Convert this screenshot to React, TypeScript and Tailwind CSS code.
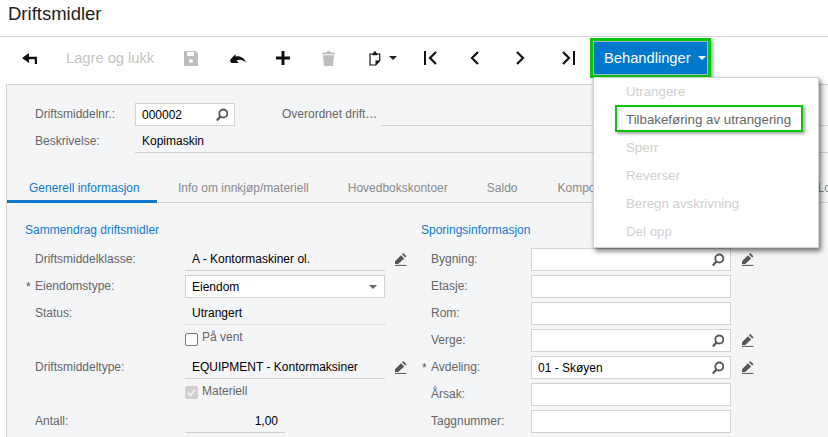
import type { ReactNode } from 'react';

const SearchIcon = () => (
  <svg width="14" height="14" viewBox="0 0 14 14" className="shrink-0">
    <circle cx="8.300" cy="5.500" r="4" fill="none" stroke="#555" strokeWidth="1.800" />
    <path d="M5.500 8.500 1.800 12.400" stroke="#555" strokeWidth="2.200" />
  </svg>
);

const PencilIcon = () => (
  <svg width="13" height="13" viewBox="0 0 13 13" className="shrink-0">
    <path d="M1 8.200 7 2.200l3.200 3.200-6 5.600H1z" fill="#555" />
    <path d="M8 1.200 9.200 0l3.300 3.300-1.300 1.200z" fill="#555" />
    <path d="M1 12.400h11.400" stroke="#555" strokeWidth="1" />
  </svg>
);

const tool = (content: ReactNode, cls = '') => (
  <div className={`flex shrink-0 items-center justify-center ${cls}`}>{content}</div>
);

function Toolbar() {
  return (
    <div className="flex h-[47px] items-center pb-[5px]">
      {tool(
        <svg width="15" height="11" viewBox="0 0 15 11">
          <path d="M0 5 7 0v3.800h8V11h-2.200V6.200H7V10z" fill="#111" />
        </svg>,
        'w-[15px] ml-[22px]'
      )}
      <span className="ml-[29px] w-[89px] shrink-0 whitespace-nowrap text-[14.700px] text-[#c4c4c4]">Lagre og lukk</span>
      {tool(
        <svg width="14" height="15" viewBox="0 0 14 15">
          <path d="M0 0h11.500L14 2.500V15H0z" fill="#bdbdbd" />
          <path d="M3 1h7v4H3z" fill="#fff" />
          <circle cx="7" cy="10" r="2" fill="#fff" />
        </svg>,
        'w-[14px] ml-[29px]'
      )}
      {tool(
        <svg width="16" height="9" viewBox="0 0 16 9">
          <path d="M0 6 5.500 0v2.400C10 1.500 14.500 3.500 16 9 13.500 5.800 9.500 5 6.500 6.200L8.500 9H1z" fill="#111" />
        </svg>,
        'w-[16px] ml-[32px]'
      )}
      {tool(
        <svg width="14" height="14" viewBox="0 0 14 14">
          <path d="M5.500 0h3v5.500H14v3H8.500V14h-3V8.500H0v-3h5.500z" fill="#111" />
        </svg>,
        'w-[14px] ml-[30px]'
      )}
      {tool(
        <svg width="13" height="15" viewBox="0 0 13 15">
          <path d="M0 1.500h4.500L5 0h3l.5 1.500H13v1.700H0zM1 4.200h11L11 15H2z" fill="#bdbdbd" />
        </svg>,
        'w-[13px] ml-[32px]'
      )}
      {tool(
        <svg width="12" height="15" viewBox="0 0 12 15">
          <path d="M1 3h9.700v6.500L6.800 14H1z" fill="#fff" stroke="#111" strokeWidth="1.200" />
          <path d="M3.500 2.200h1.200V.6h2.400v1.600h1.200v2H3.500zM6.500 14V9.500h4.500z" fill="#111" />
        </svg>,
        'w-[12px] ml-[34px]'
      )}
      <span className="ml-[8px] h-0 w-0 shrink-0 border-x-[4px] border-t-[4px] border-x-transparent border-t-[#222]" />
      {tool(
        <svg width="13" height="14" viewBox="0 0 13 14">
          <path d="M1 0v14" stroke="#111" strokeWidth="2" />
          <path d="M12 1 6 7l6 6" fill="none" stroke="#111" strokeWidth="2.200" />
        </svg>,
        'w-[13px] ml-[27px]'
      )}
      {tool(
        <svg width="9" height="14" viewBox="0 0 9 14">
          <path d="M8 1 2 7l6 6" fill="none" stroke="#111" strokeWidth="2.200" />
        </svg>,
        'w-[9px] ml-[33px]'
      )}
      {tool(
        <svg width="9" height="14" viewBox="0 0 9 14">
          <path d="m1 1 6 6-6 6" fill="none" stroke="#111" strokeWidth="2.200" />
        </svg>,
        'w-[9px] ml-[37px]'
      )}
      {tool(
        <svg width="13" height="14" viewBox="0 0 13 14">
          <path d="M12 0v14" stroke="#111" strokeWidth="2" />
          <path d="m1 1 6 6-6 6" fill="none" stroke="#111" strokeWidth="2.200" />
        </svg>,
        'w-[13px] ml-[37px]'
      )}
    </div>
  );
}

function Label({ text, required }: { text: string; required?: boolean }) {
  return (
    <div className="relative w-[150px] shrink-0 pb-[2px] text-[#666]">
      {required && <span className="absolute left-[-9px] top-[1px] text-[#555]">*</span>}
      {text}
    </div>
  );
}

function Row({ children }: { children: ReactNode }) {
  return <div className="mb-[4px] flex h-[23px] items-center">{children}</div>;
}

function TextField({ value, icon }: { value?: string; icon?: boolean }) {
  return (
    <div className="flex h-[23px] w-[200px] shrink-0 items-center justify-between border border-[#d2d2d2] bg-white pl-[6px] pr-[5px] text-black">
      <span>{value}</span>
      {icon && <SearchIcon />}
    </div>
  );
}

function LineField({ value, dotted, narrow, right }: { value: string; dotted?: boolean; narrow?: boolean; right?: boolean }) {
  return (
    <div
      className={`flex h-[23px] shrink-0 items-center border-b border-[#d2d2d2] px-[7px] text-black ${dotted ? 'border-dotted' : ''} ${narrow ? 'w-[100px]' : 'w-[200px]'} ${right ? 'justify-end' : ''}`}
    >
      {value}
    </div>
  );
}

const tabs = [
  { text: 'Info om innkjøp/materiell', left: 21 },
  { text: 'Hovedbokskontoer', left: 39 },
  { text: 'Saldo', left: 39 },
  { text: 'Komponenter', left: 40 },
  { text: 'Lokasjon', left: 188 },
];

const menu = ['Utrangere', 'Tilbakeføring av utrangering', 'Sperr', 'Reverser', 'Beregn avskrivning', 'Del opp'];

export default function App() {
  return (
    <div className="relative h-[437px] w-[828px] overflow-hidden bg-white font-['Liberation_Sans',Arial,sans-serif] text-[12px]">
      <div className="h-[37px] border-b border-[#d2d2d2] pl-[8px] pt-[1px] text-[18.500px] leading-[25px] text-[#222]">Driftsmidler</div>
      <Toolbar />

      <div className="ml-[6px] h-[400px] border-l border-t border-[#d2d2d2] bg-[#f4f5f7]">
        <div className="flex h-[41px] items-end">
          <div className="flex h-[23px] w-[128px] items-center pb-[2px] pl-[28px] text-[#666]">Driftsmiddelnr.:</div>
          <div className="flex h-[23px] w-[100px] items-center justify-between border border-[#d2d2d2] bg-white pl-[6px] pr-[5px] text-black">
            000002
            <SearchIcon />
          </div>
          <div className="flex h-[23px] w-[146px] items-center whitespace-nowrap pb-[2px] pl-[47px] text-[#666]">Overordnet drift…</div>
          <div className="h-[23px] flex-1 border-b border-[#d2d2d2]" />
        </div>
        <div className="mt-[4px] flex h-[23px]">
          <div className="flex w-[128px] items-center pb-[2px] pl-[28px] text-[#666]">Beskrivelse:</div>
          <div className="flex flex-1 items-center border-b border-[#d2d2d2] pl-[7px] text-black">Kopimaskin</div>
        </div>

        <div className="mt-[15px] flex h-[35px] items-start border-b border-[#d2d2d2] whitespace-nowrap">
          <div className="h-[35px] w-[150px] shrink-0 border-b-[3px] border-[#0f7ad0] pl-[22px] pt-[13px] leading-[15px] text-[#0f7ad0]">Generell informasjon</div>
          {tabs.map((t) => (
            <div key={t.text} className="shrink-0 pt-[13px] leading-[15px] text-[#8a8a8a]" style={{ marginLeft: t.left }}>
              {t.text}
            </div>
          ))}
        </div>

        <div className="flex">
          <div className="w-[400px] shrink-0 pl-[18px]">
            <div className="mb-[10px] mt-[19px] h-[16px] leading-[16px] text-[#0f7ad0]">Sammendrag driftsmidler</div>
            <div className="pl-[10px]">
              <Row>
                <Label text="Driftsmiddelklasse:" />
                <LineField value="A - Kontormaskiner ol." />
                <span className="ml-[9px]"><PencilIcon /></span>
              </Row>
              <Row>
                <Label text="Eiendomstype:" required />
                <div className="flex h-[23px] w-[200px] items-center justify-between border border-[#d2d2d2] bg-white pl-[6px] pr-[7px] text-black">
                  Eiendom
                  <span className="h-0 w-0 border-x-[4px] border-t-[4px] border-x-transparent border-t-[#666]" />
                </div>
              </Row>
              <Row>
                <Label text="Status:" />
                <LineField value="Utrangert" dotted />
              </Row>
              <Row>
                <div className="w-[150px] shrink-0" />
                <span className="mb-[3px] h-[13px] w-[13px] rounded-[2px] border border-[#777] bg-white" />
                <span className="mb-[7px] ml-[4px] text-[#666]">På vent</span>
              </Row>
              <Row>
                <Label text="Driftsmiddeltype:" />
                <LineField value="EQUIPMENT - Kontormaksiner" />
                <span className="ml-[9px]"><PencilIcon /></span>
              </Row>
              <Row>
                <div className="w-[150px] shrink-0" />
                <span className="mb-[4px] flex h-[13px] w-[13px] items-center justify-center rounded-[2px] bg-[#cfcfcf]">
                  <svg width="11" height="11" viewBox="0 0 11 11">
                    <path d="m2 5.500 2.500 3L9 2.500" fill="none" stroke="#eee" strokeWidth="2" />
                  </svg>
                </span>
                <span className="mb-[7px] ml-[4px] text-[#666]">Materiell</span>
              </Row>
              <Row>
                <Label text="Antall:" />
                <LineField value="1,00" narrow right />
              </Row>
            </div>
          </div>

          <div className="flex-1 pl-[14px]">
            <div className="mb-[10px] mt-[19px] h-[16px] leading-[16px] text-[#0f7ad0]">Sporingsinformasjon</div>
            <div className="pl-[10px]">
              {[
                { label: 'Bygning:', icon: true, edit: true },
                { label: 'Etasje:' },
                { label: 'Rom:' },
                { label: 'Verge:', icon: true, edit: true },
                { label: 'Avdeling:', icon: true, edit: true, value: '01 - Skøyen', required: true },
                { label: 'Årsak:' },
                { label: 'Taggnummer:' },
              ].map((f) => (
                <Row key={f.label}>
                  <div className="relative w-[100px] shrink-0 pb-[2px] text-[#666]">
                    {f.required && <span className="absolute left-[-9px] top-[1px] text-[#555]">*</span>}
                    {f.label}
                  </div>
                  <TextField value={f.value} icon={f.icon} />
                  {f.edit && <span className="ml-[10px]"><PencilIcon /></span>}
                </Row>
              ))}
            </div>
          </div>
        </div>
      </div>

      {/* button and its menu lie over the toolbar and the form */}
      <div className="absolute left-[590px] top-[38px] flex h-[40px] w-[121px] items-center border-[3px] border-[#0ac40a] shadow-[2px_2px_3px_rgba(0,0,0,0.35)]">
        <div className="flex h-full w-full items-center border border-[#9db8cc] bg-[#0078cc] pl-[10px] text-[14.700px] text-white">
          Behandlinger
          <span className="ml-[7px] h-0 w-0 border-x-[4px] border-t-[4px] border-x-transparent border-t-white" />
        </div>
      </div>

      <div className="absolute left-[593px] top-[77px] h-[171px] w-[226px] border border-[#d2d2d2] bg-white text-[13.300px] text-[#d0d0d0] shadow-[2px_3px_5px_rgba(0,0,0,0.55)]">
        {menu.map((m, i) => (
          <div key={m} className={`flex h-[28px] items-center pl-[32px] ${i === 1 ? 'text-[#666]' : ''}`}>{m}</div>
        ))}
      </div>
      <div className="absolute left-[615px] top-[105px] h-[27px] w-[188px] border-[2px] border-[#0ac40a] shadow-[2px_2px_3px_rgba(0,0,0,0.35)]" />
    </div>
  );
}
